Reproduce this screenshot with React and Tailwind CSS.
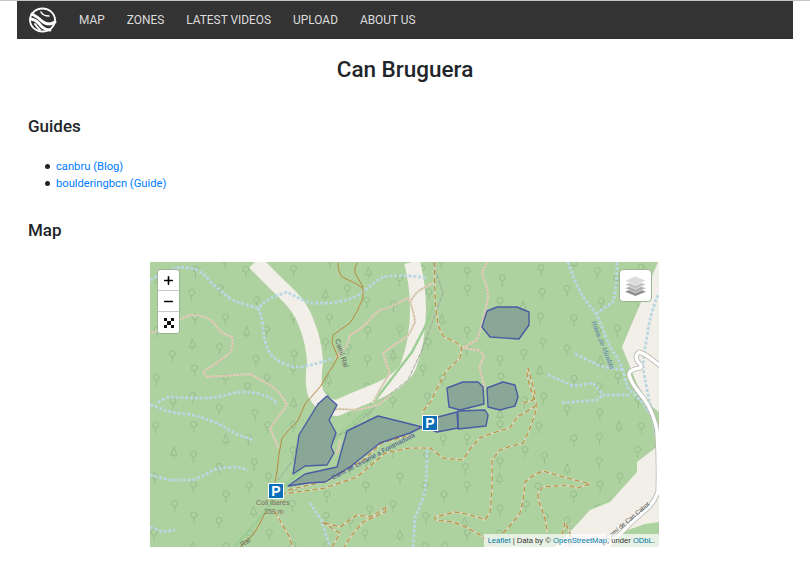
import { Plus, Minus } from "lucide-react";

const navLinks = ["MAP", "ZONES", "LATEST VIDEOS", "UPLOAD", "ABOUT US"];

const bluePaths = [
  "M0 18 L20 8 Q32 4 40 6 Q50 8 57 16 Q62 22 70 28 Q78 36 87 40 L108 46 Q116 38 123 35 L137 30 Q148 36 160 41 Q178 42 193 39 Q205 36 213 30 Q224 20 233 15 Q245 13 260 14 L278 16",
  "M108 46 Q112 55 113 65 Q114 78 118 88 Q124 98 133 101 Q142 106 150 105 Q168 102 183 96",
  "M8 141 Q14 136 20 135 L43 136 Q60 137 77 133 Q85 130 93 130 Q104 130 113 133 Q122 136 128 142",
  "M0 143 Q5 144 7 145 Q18 150 27 151 Q40 152 50 155 Q58 158 67 161 L86 172 L103 178",
  "M0 213 L20 218 L43 218 Q54 214 63 208 Q74 205 87 205 L98 208",
  "M0 265 L13 270 L25 268",
  "M160 241 Q166 250 172 260 L180 285",
  "M418 0 Q424 18 433 35 Q440 44 447 53 Q454 70 460 85 Q468 96 473 108 Q475 118 478 126 L493 141 L500 152",
  "M467 0 Q467 24 463 40 L447 51",
  "M425 92 Q438 98 450 104 L473 108",
  "M398 113 Q410 118 423 124 L443 121 L453 133 L480 133",
  "M412 141 L423 140 L447 138 L453 133",
  "M508 33 Q500 52 497 75 Q494 90 493 105 Q496 125 500 141 L506 175",
  "M277 188 Q277 210 275 230 Q270 244 265 256 L263 285",
];

const pinkPaths = [
  "M0 71 L20 66 Q30 56 40 53 Q54 52 63 60 Q68 66 72 71 L82 75 Q84 84 80 91 Q66 102 53 110 L57 115 L100 112 Q112 118 123 125 Q132 132 137 143 Q128 156 120 166 L128 185",
  "M186 96 Q192 90 197 83 L200 73 Q210 68 217 61 Q224 52 230 48 Q240 46 250 40 L258 36 Q264 48 265 60 Q262 68 257 75 Q244 82 233 91 Q236 102 240 111 Q230 126 223 141",
  "M338 0 Q331 8 333 15 Q338 25 338 35 Q334 58 327 78 L312 86 L328 88 Q334 92 334 96 Q329 102 330 108 L335 126",
  "M260 41 Q264 32 270 28 L283 21",
  "M168 149 L190 147 L208 148 L228 143 L240 134",
  "M186 192 Q190 185 190 178",
];

const trackPaths = [
  "M285 0 Q284 14 285 28 Q285 46 288 61 Q290 70 295 76 Q305 78 312 86 L310 96 Q304 102 297 108 Q288 124 280 141 L272 150",
  "M373 141 L383 138 L385 131 L378 106 L377 111 Q378 122 387 143 Q384 158 377 173 L373 181 Q360 184 350 188 L342 198 Q343 226 340 250 L335 258 Q320 252 305 250 L285 255 L285 258 L303 260 Q320 266 333 275 L344 285",
  "M387 143 Q376 150 367 155 L360 166 Q344 170 330 176 Q320 186 313 198 L293 196 L280 186 L260 186 L235 191 L207 215 L175 226 L133 232",
  "M138 228 L177 219 L212 199 L232 181 L260 173",
  "M353 271 Q362 262 370 251 Q374 236 375 220 Q384 212 393 209 L417 216 L440 222 L427 226 L417 223 L393 225 L388 231 Q388 238 390 243 Q396 256 397 270",
  "M412 273 L415 260 L420 271 L420 285",
  "M125 250 Q132 262 140 276 L142 285",
  "M182 285 L190 271 L172 260 L190 265 L207 253 L220 255 L237 245 L235 250 L213 260 L202 273 L194 285",
];

const solidBrown = [
  "M188 1 Q188 10 192 15 Q204 20 213 26 L213 36 Q208 50 200 61 Q190 68 183 73 L182 81 L188 95 Q182 106 177 113 L170 125 L155 142 Q152 150 147 160 Q138 168 132 176 Q128 194 127 210 L125 220",
  "M207 1 Q204 6 205 11 L213 25",
  "M115 251 Q110 262 103 273 L90 285",
];

const polygons = [
  "337,49 347,45 367,45 379,50 379,63 369,77 340,75 332,65",
  "297,126 313,120 328,120 333,125 334,142 310,148 299,145",
  "337,126 353,120 365,123 368,135 365,144 350,148 338,145",
  "308,149 335,148 338,153 336,164 308,167",
  "288,155 307,150 308,166 287,170 279,167",
  "138,224 155,212 187,205 197,169 228,154 272,165 260,171 230,181 200,205 175,220 158,221",
  "177,134 187,143 179,158 186,171 181,185 184,191 177,203 155,204 143,212 149,173 168,142",
];

const roadRight = "M509 103 Q496 92 489 90 Q484 94 488 100 Q493 104 490 106 Q478 108 479 113 Q482 122 488 129 Q494 136 498 143 Q504 154 507 168 Q509 200 508 230 Q505 238 500 244 L480 262 L457 285";

// scattered woodland symbols, same pseudo random spread every render
const trees = [];
for (let col = 0; col < 18; col++) {
  for (let row = 0; row < 11; row++) {
    const x = col * 29 + 8 + Math.sin(col * 7.3 + row * 3.1) * 10 + (row % 2) * 13;
    const y = row * 27 + 8 + Math.cos(col * 4.7 + row * 5.9) * 9;
    trees.push({ x, y, pine: (col * 5 + row * 3) % 7 === 0 });
  }
}

function MapDrawing() {
  return (
    <svg viewBox="0 0 509 285" className="block w-full h-full" fill="none" strokeLinejoin="round" strokeLinecap="round">
      <rect width="509" height="285" fill="#aed1a0" />

      {trees.map((t, i) =>
        t.pine ? (
          <path key={i} d={`M${t.x} ${t.y + 7} V${t.y + 4} M${t.x - 3} ${t.y + 4} L${t.x} ${t.y - 4} L${t.x + 3} ${t.y + 4} Z`} stroke="#98be8d" strokeWidth="1" />
        ) : (
          <g key={i} stroke="#98be8d" strokeWidth="1">
            <circle cx={t.x} cy={t.y - 1} r="3" />
            <path d={`M${t.x} ${t.y + 2} V${t.y + 7}`} />
          </g>
        )
      )}

      <path d="M508 0 L472 85 L487 122 L500 143 L509 150 V0 Z" fill="#f2efe9" />
      <path d="M509 183 L487 200 L487 210 L460 240 L440 248 L420 270 L405 285 H509 Z" fill="#f2efe9" />
      <path d="M458 285 L478 268 L495 262 L509 260 V285 Z" fill="#aed1a0" />

      <path d="M105 0 Q122 18 135 30 Q150 44 156 60 Q164 80 165 100 Q162 122 166 132 Q174 146 187 146 Q205 138 225 130 Q250 120 258 105 Q268 78 268 48 Q268 22 262 0" stroke="#f2efe9" strokeWidth="16" strokeLinecap="butt" />

      <path d="M84 285 L115 250 L130 228 L160 200 L220 145 L262 90 L275 65 L285 40 L285 15" stroke="#9dcf95" strokeWidth="2.5" />
      <path d="M128 218 L147 193 L167 180 L197 170 L240 132 L258 118 L272 88 L293 31 L283 1" stroke="#9aa79a" strokeWidth="1" strokeDasharray="4 2" />

      {bluePaths.map((d) => (
        <path key={d} d={d} stroke="#bad8e3" strokeWidth="2.8" strokeDasharray="3 1.8" strokeLinecap="butt" />
      ))}

      <path d={roadRight} stroke="#b5b5ae" strokeWidth="5" />
      <path d={roadRight} stroke="#ffffff" strokeWidth="3.5" />

      {pinkPaths.map((d) => (
        <g key={d}>
          <path d={d} stroke="#d3d8bb" strokeWidth="2" />
          <path d={d} stroke="#eda5a0" strokeWidth="1.1" strokeDasharray="1.5 2" strokeLinecap="butt" />
        </g>
      ))}

      {solidBrown.map((d) => (
        <path key={d} d={d} stroke="#b58a3c" strokeWidth="1" />
      ))}

      {trackPaths.map((d) => (
        <g key={d}>
          <path d={d} stroke="#d3d8bb" strokeWidth="2" />
          <path d={d} stroke="#b48c3a" strokeWidth="1.1" strokeDasharray="5 3" strokeLinecap="butt" />
        </g>
      ))}

      {polygons.map((pts) => (
        <polygon key={pts} points={pts} fill="#8aa697" stroke="#4a5ca2" strokeWidth="1.4" />
      ))}

      <g fontFamily="'Liberation Sans', sans-serif" fontSize="7">
        <text transform="translate(185 78) rotate(72)" fill="#55605a">Camí Ral</text>
        <text x="106" y="243" fill="#7a6a5c" fontSize="7">Coll Ibarés</text>
        <text x="114" y="252" fill="#7a6a5c" fontSize="7">359 m</text>
        <text transform="translate(92 285) rotate(-32)" fill="#5e6a5c">Ral</text>
        <text transform="translate(183 218) rotate(-28)" fill="#3d4a8a" fontSize="6.5">Camí de Levante a Fontmaduda</text>
        <text transform="translate(441 60) rotate(68)" fill="#5b86b0" fontStyle="italic">Riera de Miralda</text>
        <text transform="translate(458 278) rotate(-40)" fill="#444" fontSize="6.2">Camí de Can Cabot</text>
      </g>
    </svg>
  );
}

function ParkingPin({ className }) {
  return (
    <div className={`absolute flex items-center justify-center w-4 h-4 bg-[#0a6fb8] border border-white text-white font-bold text-[14px] leading-none font-['Liberation_Sans',sans-serif] ${className}`}>
      P
    </div>
  );
}

function GuideLink({ children }) {
  return (
    <li className="flex items-center gap-[6px]">
      <span className="w-[5px] h-[5px] rounded-full bg-[#212529]" />
      <a href="#" className="text-[#007bff]">{children}</a>
    </li>
  );
}

export default function App() {
  return (
    <div className="min-h-[582px] bg-white border-t border-[#c4c4c4] font-['Roboto',sans-serif] text-[#212529]">
      <nav className="mx-[17px] h-[38px] bg-[#333333] flex items-center pl-[11px] text-[11.9px] text-[#dddddd]">
        <svg viewBox="0 0 29 26" className="w-[29px] h-[26px] mr-[22px]" fill="none" strokeLinecap="round">
          <ellipse cx="14.5" cy="13" rx="12.5" ry="11.5" stroke="#ffffff" strokeWidth="1.8" />
          <path d="M3 12 Q9 13 13 19 Q17 23 22 23" stroke="#ffffff" strokeWidth="3" />
          <path d="M4 7 Q10 10 15 15 Q21 19 27 15" stroke="#ffffff" strokeWidth="3" />
          <path d="M13 5 Q15 9 21 9" stroke="#ffffff" strokeWidth="1.5" />
          <path d="M7 17 Q9 20 12 23" stroke="#ffffff" strokeWidth="2" />
        </svg>
        <div className="flex gap-[22px] pt-[1px]">
          {navLinks.map((link) => (
            <a key={link} href="#" className="whitespace-nowrap">{link}</a>
          ))}
        </div>
      </nav>

      <main className="mx-[17px] px-[11px]">
        <h1 className="mt-[16px] text-center text-[22.5px] leading-[29px] font-medium">Can Bruguera</h1>

        <h2 className="mt-[31px] text-[17px] leading-[22px] font-medium">Guides</h2>
        <ul className="mt-[21px] pl-[17px] text-[11.2px] leading-[17px]">
          <GuideLink>canbru (Blog)</GuideLink>
          <GuideLink>boulderingbcn (Guide)</GuideLink>
        </ul>

        <h2 className="mt-[27px] text-[17px] leading-[22px] font-medium">Map</h2>

        <div className="relative mt-[21px] ml-[122px] w-[509px] h-[285px] overflow-hidden">
          <MapDrawing />

          <ParkingPin className="left-[118px] top-[221px]" />
          <ParkingPin className="left-[272px] top-[153px]" />

          <div className="absolute left-[7px] top-[7px] w-[23px] bg-white rounded-[3px] border border-[#9cb394] divide-y divide-[#c9c9c9] text-black">
            <div className="h-[21px] flex items-center justify-center"><Plus size={13} strokeWidth={3} /></div>
            <div className="h-[21px] flex items-center justify-center"><Minus size={13} strokeWidth={3} /></div>
            <div className="h-[21px] flex items-center justify-center">
              <svg viewBox="0 0 10 10" className="w-[10px] h-[10px]" fill="#111111">
                <rect x="0" y="0" width="3" height="3" />
                <rect x="7" y="0" width="3" height="3" />
                <rect x="0" y="7" width="3" height="3" />
                <rect x="7" y="7" width="3" height="3" />
                <rect x="3" y="3" width="4" height="4" />
              </svg>
            </div>
          </div>

          <div className="absolute left-[469px] top-[7px] w-[33px] h-[33px] bg-white rounded-[4px] border border-[#9cb394] flex items-center justify-center">
            <svg viewBox="0 0 20 20" className="w-[21px] h-[21px]">
              <path d="M10 12 L20 16 L10 20 L0 16 Z" fill="#8f8f8f" />
              <path d="M10 8.5 L20 12.5 L10 17 L0 12.5 Z" fill="#adadad" stroke="#ffffff" strokeWidth="0.5" />
              <path d="M10 5 L20 9 L10 13.5 L0 9 Z" fill="#c2c2c2" stroke="#ffffff" strokeWidth="0.5" />
              <path d="M10 1 L20 5.5 L10 10 L0 5.5 Z" fill="#dcdcdc" stroke="#ffffff" strokeWidth="0.5" />
            </svg>
          </div>

          <div className="absolute right-0 bottom-0 h-[13px] px-[4px] bg-white/70 text-[7.65px] leading-[13px] text-[#333333] whitespace-nowrap font-['Liberation_Sans',sans-serif]">
            <a href="#" className="text-[#0078a8]">Leaflet</a> | Data by © <a href="#" className="text-[#0078a8]">OpenStreetMap</a>, under <a href="#" className="text-[#0078a8]">ODbL</a>.
          </div>
        </div>
      </main>
    </div>
  );
}
